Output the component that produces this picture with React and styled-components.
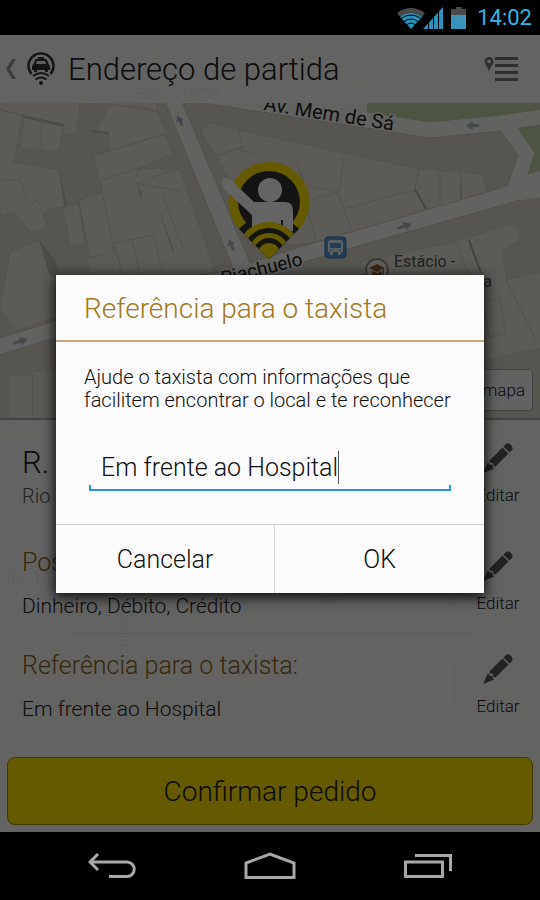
import { useState } from "react";
import styled, { createGlobalStyle } from "styled-components";

const edits = [
  { id: "address", title: "R. Riachuelo", text: "Rio de Janeiro", kind: "address" },
  { id: "payment", title: "Posso pagar com:", text: "Dinheiro, Débito, Crédito" },
  { id: "reference", title: "Referência para o taxista:", text: "Em frente ao Hospital" },
];

function App() {
  const [reference, setReference] = useState("Em frente ao Hospital");

  return (
    <Screen>
      <GlobalStyle />
      <StatusBar>
        <StatusIcons />
        <Clock>14:02</Clock>
      </StatusBar>
      <Body>
        <CityMap />
        <Header>
          <BackButton aria-label="Voltar">
            <svg width="10" height="20" viewBox="0 0 10 20">
              <path d="M6 0h4L4 10l6 10H6L0 10z" fill="#999" />
            </svg>
          </BackButton>
          <TaxiLogo />
          <Title>Endereço de partida</Title>
          <MenuButton aria-label="Lista">
            <svg width="35" height="26" viewBox="0 0 35 26">
              <path d="M5 1a4.400 4.400 0 0 1 4.400 4.400C9.400 8.500 6.500 10 5 16 3.500 10 .6 8.500.6 5.400A4.400 4.400 0 0 1 5 1zm0 2.600a1.800 1.800 0 1 0 0 3.600 1.800 1.800 0 0 0 0-3.600z" fill="#777" />
              <path d="M11 2.500h23M11 9.500h23M11 16.500h23M11 23.500h23" stroke="#777" strokeWidth="3" />
            </svg>
          </MenuButton>
        </Header>
        <MapArea>
          <MapButton>Ver no mapa</MapButton>
        </MapArea>
        <Panel>
          {edits.map((item) => (
            <Row key={item.id} $kind={item.kind}>
              <RowInfo>
                <RowTitle $kind={item.kind}>{item.title}</RowTitle>
                <RowText $kind={item.kind}>{item.text}</RowText>
              </RowInfo>
              <EditButton>
                <Pencil />
                Editar
              </EditButton>
            </Row>
          ))}
          <ConfirmButton>Confirmar pedido</ConfirmButton>
        </Panel>
        <Backdrop>
          <Dialog role="dialog" aria-labelledby="dialog-title">
            <DialogTitle id="dialog-title">Referência para o taxista</DialogTitle>
            <DialogBody>
              <Label htmlFor="reference">
                Ajude o taxista com informações que facilitem encontrar o local e te reconhecer
              </Label>
              <Field>
                <Input
                  id="reference"
                  value={reference}
                  onChange={(e) => setReference(e.target.value)}
                />
                <Caret />
              </Field>
            </DialogBody>
            <Actions>
              <ActionButton>Cancelar</ActionButton>
              <ActionButton>OK</ActionButton>
            </Actions>
          </Dialog>
        </Backdrop>
      </Body>
      <NavBar>
        <NavButton aria-label="Voltar">
          <svg width="48" height="26" viewBox="0 0 48 26" fill="none" stroke="#a8a8a8" strokeWidth="3">
            <path d="M10 1L2 9l8 8M2 9h37a7 7 0 0 1 0 14.500H21" />
          </svg>
        </NavButton>
        <NavButton aria-label="Início">
          <svg width="52" height="28" viewBox="0 0 52 28" fill="none" stroke="#a8a8a8" strokeWidth="3">
            <path d="M2 25.500V11L26 2l24 9v14.500z" />
          </svg>
        </NavButton>
        <NavButton aria-label="Recentes">
          <svg width="48" height="26" viewBox="0 0 48 26" fill="none" stroke="#a8a8a8" strokeWidth="3">
            <path d="M11 2.500h35.500V18M1.500 9h37v14.500h-37z" />
          </svg>
        </NavButton>
      </NavBar>
    </Screen>
  );
}

function StatusIcons() {
  return (
    <svg width="70" height="24" viewBox="397 5 70 24" aria-hidden="true">
      <path d="M397 12q14-10 28 0l-3 4q-11-8-22 0z" fill="#4a4a4a" />
      <path d="M400 16q11-8 22 0l-11 12z" fill="#2b92bd" />
      <g fill="none" stroke="#000" strokeWidth="1">
        <path d="M401 17.500q10-7 20 0M404 20.500q7-5 14 0M406.500 23.500q4.500-3 9 0" />
      </g>
      <path d="M443 6v22h-20z" fill="#2b92bd" />
      <path d="M428.500 20v8M433.500 14v14M438.500 9v19" stroke="#000" strokeWidth="1" />
      <path d="M451 8h5V6h6v2h4v6h-15z" fill="#4a4a4a" />
      <path d="M451 14h15v14h-15z" fill="#3a93b8" />
    </svg>
  );
}

function TaxiLogo() {
  return (
    <svg width="30" height="36" viewBox="0 0 30 36" aria-hidden="true">
      <path d="M5.500 23A12.500 12.500 0 1 1 24.500 23" fill="none" stroke="#333" strokeWidth="2.400" />
      <path d="M12 6h6v2h1.500q1.500 0 2 2l1 3q1.500 1 1.500 3v3h-2v2h-3v-2h-8v2H8v-2H6v-3q0-2 1.500-3l1-3q.5-2 2-2H12z" fill="#333" />
      <path d="M11 10h8l1 3H10z" fill="#eee" />
      <path d="M7 25q8-6 16 0M9.500 28.500q5.500-4 11 0" fill="none" stroke="#333" strokeWidth="2" />
      <circle cx="15" cy="32" r="2" fill="#333" />
    </svg>
  );
}

function Pencil() {
  return (
    <svg width="30" height="30" viewBox="0 0 30 30" aria-hidden="true" fill="#555">
      <path d="M20.500 3.500l2.500-2.500q2.500-2 5 1t1 5l-2.500 2.500z" />
      <path d="M19.500 4.500l6 6-13 13-2-.5-.5-3-3-.5-.5-2z" />
      <path d="M5 19l1.500 2.500 3 .5.5 3 1.500.5L0 30z" />
    </svg>
  );
}

// The map runs under the whole screen; the header and the panel are slightly see-through.
function CityMap() {
  return (
    <MapSvg viewBox="0 35 540 797" preserveAspectRatio="xMidYMin slice" aria-hidden="true">
      <rect y="35" width="540" height="797" fill="#d9d5c8" />
      <g fill="#e6e4da" stroke="#d0cdc2" strokeWidth="1">
        <path d="M0 110l22 5-8 47 45 8 6 36-24 6-4 18-14-4-12-22-11 7z" />
        <path d="M24 117l40 8-5 26-38-3z" />
        <path d="M0 35h90l-10 68-4 32-12-2v-8l-42-10-22-6zM94 35h60l3 77-8-4-58-5zM110 104l47 8 10 21-73 22 2 10 17-5-8-25-10-2z" />
        <path d="M93 156l72-22 8 20-36 15-37 12z" />
        <path d="M100 181l38-13 42 1 35 103-120 25-16-97 22-7z" />
        <path d="M63 208l16-4 6 40-15 1z" />
        <path d="M0 180l20 0 10 24 8-4 10 28-18 4-16-20-14 3z" />
        <path d="M10 252l29-12 17 35v42l-42 14-14-24z" />
        <path d="M86 259l30-8 6 24H90z" />
        <path d="M201 131l8-8 30 7 105 23 76 16 63 5 4 18-65 22-82 24-48 8-30-13z" />
        <path d="M360 262l93-20 60-18 6 5v12l-17 9 5 30 35-8v76l-56 12-60-20z" />
        <path d="M9 375h24v44H9zM33 371h30v48H33z" />
        <path d="M0 440h96v200H0zM150 500h150v110H150zM330 440h110v150H330z" />
      </g>
      <g fill="none" stroke="#cbc8bd" strokeWidth="1">
        <path d="M42 122l-2 26M100 182l15 74M79 204l11 52M140 168l-4 10M163 196l20 52M136 184l38-15M180 191l-40-7M115 243l39-8 9 39M132 239l8 36M115 244l7 31" />
        <path d="M203 160l40-13-5-17M239 150l18 4M297 162l8 23 34 7 5-34M338 193l14 37M310 200l28-8M344 209l72-20M300 185l17 58M419 169l-4 20M440 171v36M461 173v28M455 242l14 33M506 280l30 60M484 303l15-5 7 35-17 4z" />
      </g>
      <g fill="#bfbcb1">
        <path d="M22 115l42 9v3l-40-9zM90 130l18 2 3 14-4-12-17-2zM59 170l8 36-3-1zM39 240l17 22 7 20-14-8zM138 182l4 14-2 1zM154 195l20 56-1 1z" />
        <path d="M415 190l12 21-1-1zM461 173l1 28h-2zM469 239l13 35-1 1zM503 281l12 27-1-2z" />
        <path d="M415 190l12 20M469 240l12 33" stroke="#aaa79d" strokeWidth="2" />
      </g>
      <g fill="#f5f5f3" stroke="#c9c6ba" strokeWidth="1">
        <path d="M160 90h17l73 173 50-16 187-55 20-6 11-31-18-24-70 7L203 103v-13h165l0 22 62 10 70-7 41-6v89l-24 3-180 51L-1 355v-17l234-70z" />
      </g>
      <path d="M367 102h174v8l-41 5-70 7-63-10z" fill="#c3d2a5" />
      <path d="M518 128l23-3v45l-13 4 7-21z" fill="#c3d2a5" stroke="#c9c6ba" />
      <g fill="#aab5bd">
        <path d="M397 225h7v-3l8 4-7 5v-3h-8z" transform="rotate(-16 404 226)" />
        <path d="M13 340h7v-3l8 4-7 5v-3h-8z" transform="rotate(-16 20 341)" />
        <path d="M479 124h-6v-3l-7 5 7 4v-3h6z" />
        <path d="M179 126v-5h-3l3-6 5 6h-2v5z" transform="rotate(-18 180 121)" />
        <path d="M230 251v-6h-3l4-6 4 6h-2v6z" transform="rotate(-18 231 245)" />
      </g>
      <g fontFamily="Roboto, sans-serif" fontWeight="400" fill="#222" stroke="#f5f5f3" strokeWidth="3" paintOrder="stroke">
        <text x="263" y="110" fontSize="20" transform="rotate(9 263 110)">Av. Mem de Sá</text>
        <text x="223" y="285" fontSize="19" transform="rotate(-14 223 285)">Riachuelo</text>
      </g>
      <g fontFamily="Roboto, sans-serif" fontWeight="400" fill="#555">
        <text x="394" y="267" fontSize="16">Estácio -</text>
        <text x="492" y="287" fontSize="16" textAnchor="end">Lapa</text>
        <text x="134" y="99" fontSize="14">Edifício UVCB</text>
        <text x="8" y="585" fontSize="18">Tv. M</text>
        <text x="119" y="612" fontSize="18" transform="rotate(90 119 612)">omero</text>
        <text x="326" y="609" fontSize="18" transform="rotate(-40 326 609)">R.</text>
      </g>
      <rect x="325" y="237" width="21" height="21" rx="3" fill="#4a98dd" stroke="#3979b0" />
      <path d="M331 240h9q3 0 3 3v9h-2v3h-3v-3h-5v3h-3v-3h-2v-9q0-3 3-3z" fill="#eee" />
      <path d="M330 243h11v5h-11zM330 250h2v1h-2zM339 250h2v1h-2z" fill="#4a98dd" />
      <circle cx="377" cy="270" r="11" fill="#f4f1ee" stroke="#99948e" strokeWidth="2" />
      <path d="M369 268l8-4 8 4-8 4zM372 271l5 2 5-2v4h-10zM384 268v8h-1v-8z" fill="#9d5f2d" />
      <clipPath id="pin">
        <path d="M269 162a40 40 0 0 1 28 69l-28 28-28-28a40 40 0 0 1 28-69z" />
      </clipPath>
      <g clipPath="url(#pin)">
        <rect x="228" y="160" width="82" height="100" fill="#ffe000" />
        <circle cx="269" cy="202" r="31" fill="#333" />
        <path d="M236 231l10-8h46l10 8-33 27z" fill="#333" />
      </g>
      <circle cx="270" cy="190" r="12" fill="#fafafa" />
      <path d="M222 184q-1-6 5-6 3 0 5 3l22 21h31q8 0 8 9v20h-41v-16l-28-26q-2-2-2-5z" fill="#fafafa" />
      <path d="M282 220v8" stroke="#333" strokeWidth="2" />
      <g clipPath="url(#pin)">
        <circle cx="269" cy="254" r="32" fill="#ffe000" />
        <circle cx="269" cy="254" r="26" fill="#333" />
        <circle cx="269" cy="254" r="21" fill="#ffe000" />
        <circle cx="269" cy="254" r="16" fill="#333" />
        <circle cx="269" cy="254" r="11" fill="#ffe000" />
      </g>
    </MapSvg>
  );
}

const GlobalStyle = createGlobalStyle`
  * {
    box-sizing: border-box;
  }
  body {
    margin: 0;
    background: #000;
    font-family: Roboto, sans-serif;
    font-weight: 300;
  }
  button, input {
    font: inherit;
    color: inherit;
    background: none;
    border: 0;
    padding: 0;
  }
`;

const Screen = styled.div`
  display: flex;
  flex-direction: column;
  min-height: 100vh;
`;

const StatusBar = styled.div`
  display: flex;
  align-items: center;
  justify-content: flex-end;
  gap: 10px;
  height: 35px;
  padding: 0 8px;
`;

const Clock = styled.span`
  color: #33b5e5;
  font-size: 22px;
  font-weight: 400;
`;

const Body = styled.main`
  position: relative;
  display: flex;
  flex-direction: column;
  flex: 1;
  overflow: hidden;
  color: #222;
`;

const MapSvg = styled.svg`
  position: absolute;
  inset: 0;
  width: 100%;
  height: 100%;
`;

const Header = styled.header`
  position: relative;
  display: flex;
  align-items: center;
  height: 68px;
  padding: 0 21px 0 6px;
  background: rgba(250, 250, 250, 0.93);
`;

const BackButton = styled.button`
  display: flex;
  margin-right: 10px;
`;

const Title = styled.h1`
  flex: 1;
  margin: 0 0 0 12px;
  font-size: 31px;
  font-weight: 300;
`;

const MenuButton = styled.button`
  display: flex;
`;

const MapArea = styled.section`
  position: relative;
  display: flex;
  flex: 1;
  align-items: flex-end;
  justify-content: flex-end;
  padding: 7px;
`;

const MapButton = styled.button`
  height: 42px;
  padding: 0 7px;
  border: 1px solid #aaa;
  border-radius: 4px;
  background: #f5f5f5;
  font-size: 17px;
`;

const Panel = styled.section`
  position: relative;
  padding: 8px 7px 7px;
  border-top: 2px solid #aaa;
  background: rgba(250, 250, 250, 0.93);
`;

const Row = styled.div`
  display: flex;
  justify-content: space-between;
  height: ${(props) => (props.$kind ? "108px" : "103px")};
  padding: 11px 10px 0 15px;
  background:
    linear-gradient(#ececec, #ececec) right 77px top 20px / 1px 48px no-repeat,
    linear-gradient(#e4e4e4, #e4e4e4) left 63px bottom 5px / 400px 1px no-repeat;

  &:nth-child(3) {
    background: linear-gradient(#ececec, #ececec) right 77px top 20px / 1px 48px no-repeat;
  }
`;

const RowInfo = styled.div`
  flex: 1;
`;

const RowTitle = styled.h2`
  margin: ${(props) => (props.$kind ? "8px 0 5px" : "0 0 15px")};
  color: ${(props) => (props.$kind ? "#222" : "#8a6414")};
  font-size: ${(props) => (props.$kind ? "31px" : "25px")};
  font-weight: 300;
  line-height: 32px;
`;

const RowText = styled.p`
  margin: 0;
  color: ${(props) => (props.$kind ? "#555" : "#222")};
  font-size: ${(props) => (props.$kind ? "20px" : "21px")};
  line-height: 24px;
`;

const EditButton = styled.button`
  display: flex;
  flex-direction: column;
  align-items: center;
  gap: 12px;
  width: 50px;
  height: 65px;
  margin-top: 4px;
  font-size: 17px;
  line-height: 20px;
`;

const ConfirmButton = styled.button`
  display: block;
  width: 100%;
  height: 68px;
  margin-top: 15px;
  border: 1px solid #a88a00;
  border-radius: 8px;
  background: #ffe000;
  font-size: 28px;
`;

const Backdrop = styled.div`
  position: absolute;
  inset: 0;
  display: flex;
  align-items: center;
  justify-content: center;
  padding: 0 56px;
  background: rgba(0, 0, 0, 0.6);
`;

const Dialog = styled.div`
  width: 100%;
  max-width: 480px;
  background: #fbfbfb;
  color: #111;
  box-shadow: 0 3px 12px 2px rgba(0, 0, 0, 0.8);
`;

const DialogTitle = styled.h2`
  margin: 0;
  padding: 17px 28px 14px;
  border-bottom: 2px solid #c4a77b;
  color: #a07a1c;
  font-size: 28px;
  font-weight: 300;
  line-height: 34px;
`;

const DialogBody = styled.div`
  padding: 24px 28px 33px;
`;

const Label = styled.label`
  display: block;
  font-size: 20px;
  line-height: 23px;
`;

const Field = styled.div`
  display: flex;
  align-items: center;
  height: 46px;
  margin: 33px 5px 0;
  padding: 0 12px;
  background:
    linear-gradient(#2b95cc, #2b95cc) bottom left / 100% 2px no-repeat,
    linear-gradient(#2b95cc, #2b95cc) bottom left / 2px 6px no-repeat,
    linear-gradient(#2b95cc, #2b95cc) bottom right / 2px 6px no-repeat;
`;

const Input = styled.input`
  field-sizing: content;
  max-width: 100%;
  outline: 0;
  caret-color: transparent;
  font-size: 25px;
`;

const Caret = styled.span`
  width: 1px;
  height: 33px;
  background: #555;
`;

const Actions = styled.div`
  display: grid;
  grid-template-columns: 51fr 49fr;
  border-top: 1px solid #d0d0d0;
`;

const ActionButton = styled.button`
  height: 68px;
  padding-top: 2px;
  font-size: 25px;

  & + & {
    border-left: 1px solid #d0d0d0;
  }
`;

const NavBar = styled.nav`
  display: flex;
  height: 68px;
  padding: 0 33px;
`;

const NavButton = styled.button`
  display: flex;
  flex: 1;
  align-items: center;
  justify-content: center;
`;

export default App;
